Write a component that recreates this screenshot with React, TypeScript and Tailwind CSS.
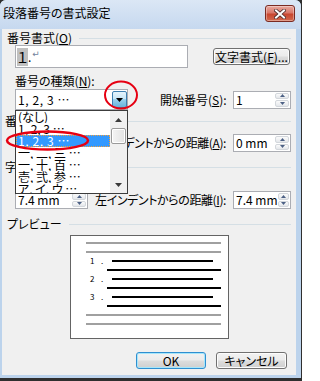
import React from "react";

function U({ c }: { c: string }) {
  return <span className="underline underline-offset-[1px]">{c}</span>;
}

function Header({ children, shift }: { children: React.ReactNode; shift?: boolean }) {
  return (
    <div className="flex h-[14px] items-center">
      <span
        className={
          shift
            ? "ml-[-2px] whitespace-nowrap text-[12px] leading-[14px]"
            : "whitespace-nowrap text-[12px] leading-[14px]"
        }
      >
        {children}
      </span>
      <div className="ml-[7px] h-px flex-1 bg-[#d5dfe5]" />
    </div>
  );
}

function SpinBtn({ up }: { up?: boolean }) {
  return (
    <div className="flex flex-1 items-center justify-center rounded-[2px] border border-[#d3d7dc] bg-[linear-gradient(#fbfbfb,#e4e7eb)]">
      <svg width="5" height="3" viewBox="0 0 5 3">
        <path d={up ? "M0 3H5L2.5 0Z" : "M0 0H5L2.5 3Z"} fill="#4d6185" />
      </svg>
    </div>
  );
}

function Spin({ value, className }: { value: string; className: string }) {
  return (
    <div className={`flex h-[18px] border border-[#abadb3] bg-white ${className}`}>
      <div className="flex-1 whitespace-nowrap pl-[2px] text-[12px] leading-[16px]">{value}</div>
      <div className="flex w-[15px] flex-col gap-px py-px pr-px">
        <SpinBtn up />
        <SpinBtn />
      </div>
    </div>
  );
}

const items = [
  "(なし)",
  "1, 2, 3 …",
  "1, 2, 3 …",
  "一, 二, 三 …",
  "一, 十, 百 …",
  "壱, 弐, 参 …",
  "ア, イ, ウ …",
];

function DropList() {
  return (
    <div className="absolute left-[-1px] top-[20px] z-10 flex h-[84px] w-[113px] border border-[#3c3c3c] bg-white">
      <div className="flex-1 overflow-hidden">
        {items.map((t, i) =>
          i === 2 ? (
            <div
              key={i}
              className="flex h-[12px] items-center overflow-hidden whitespace-nowrap border border-dotted border-[#f0a040] bg-[#3399ff] pl-px text-[12px] leading-[12px] tracking-[0.6px] text-white"
            >
              {t}
            </div>
          ) : (
            <div
              key={i}
              className="flex h-[12px] items-center overflow-hidden whitespace-nowrap pl-[2px] text-[12px] leading-[12px]"
            >
              {t}
            </div>
          )
        )}
      </div>
      <div className="flex w-[17px] flex-col bg-[#f0f0f0]">
        <div className="flex h-[17px] items-center justify-center">
          <svg width="7" height="4" viewBox="0 0 7 4">
            <path d="M0 4H7L3.5 0Z" fill="#3a3a3a" />
          </svg>
        </div>
        <div className="mx-px h-[16px] rounded-[2px] border border-[#9a9a9a] bg-[linear-gradient(90deg,#f4f4f4,#e2e2e2)] shadow-[inset_0_0_0_1px_#ffffff]" />
        <div className="flex-1" />
        <div className="flex h-[17px] items-center justify-center">
          <svg width="7" height="4" viewBox="0 0 7 4">
            <path d="M0 0H7L3.5 4Z" fill="#3a3a3a" />
          </svg>
        </div>
      </div>
    </div>
  );
}

function Combo() {
  return (
    <div className="relative ml-[8px] flex h-[21px] w-[113px] items-center border border-[#abadb3] bg-white">
      <span className="flex-1 whitespace-nowrap pl-[2px] text-[12px] leading-[14px] tracking-[0.6px]">
        1, 2, 3 …
      </span>
      <div className="flex h-[17px] w-[15px] items-center justify-center rounded-[2px] border border-[#3c7fb1] bg-[linear-gradient(#e5f4fc_0%,#c4e5f6_50%,#98d1ef_50%,#68b3db_100%)]">
        <svg width="7" height="4" viewBox="0 0 7 4">
          <path d="M0 0H7L3.5 4Z" fill="#000" />
        </svg>
      </div>
      <DropList />
    </div>
  );
}

function Gray() {
  return <div className="ml-[15px] h-[2px] w-[135px] bg-[#a0a0a0]" />;
}

function NumRow({ n }: { n: string }) {
  return (
    <>
      <div className="flex h-[2px] items-center">
        <span className="ml-[19px] w-[11px] text-[8px] leading-none">{n}</span>
        <span className="w-[11px] text-[8px] leading-none">.</span>
        <div className="h-[2px] w-[101px] bg-black" />
      </div>
      <div className="ml-[36px] h-[2px] w-[114px] bg-black" />
    </>
  );
}

const btnBase =
  "flex items-center justify-center rounded-[3px] border text-[12px] leading-[14px] bg-[linear-gradient(#f2f2f2_0%,#ebebeb_48%,#dddddd_52%,#cfcfcf_100%)]";

export default function App() {
  return (
    <div className="relative h-[381px] w-[302px] overflow-hidden bg-[#2f2f2f] pb-[3px] pr-px font-['Noto_Sans_CJK_JP',sans-serif] text-black [font-feature-settings:'palt']">
      <div className="flex h-full w-full flex-col rounded-t-[6px] bg-[#bcd3ec]">
        {/* title bar */}
        <div className="flex h-[29px] items-start rounded-t-[6px] bg-[linear-gradient(#dbe7f5,#c6d8ef)]">
          <span className="ml-[3px] mt-[6px] whitespace-nowrap text-[12px] leading-[14px]">
            段落番号の書式設定
          </span>
          <div className="ml-auto mr-[6px] mt-[5px] flex h-[17px] w-[30px] items-center justify-center rounded-[3px] border border-[#7a2a22] bg-[linear-gradient(#e8a99f_0%,#d9786a_45%,#c8462f_55%,#d26a4f_100%)] shadow-[inset_0_0_0_1px_rgba(255,255,255,0.35)]">
            <svg width="12" height="10" viewBox="0 0 12 10">
              <path d="M2 1.5L10 8.5M10 1.5L2 8.5" stroke="#4a2a2a" strokeWidth="3.6" strokeLinecap="square" />
              <path d="M2 1.5L10 8.5M10 1.5L2 8.5" stroke="#ffffff" strokeWidth="2" strokeLinecap="square" />
            </svg>
          </div>
        </div>

        {/* client */}
        <div className="flex flex-1 flex-col pb-[3px] pl-[2px] pr-[5px]">
          <div className="flex flex-1 flex-col bg-[#f0f0f0] px-[5px]">
            <div className="mt-[2px]">
              <Header>
                番号書式(<U c="O" />)
              </Header>
            </div>

            <div className="flex h-[23px] items-center">
              <div className="ml-[8px] flex h-[23px] w-[173px] items-center border border-[#abadb3] bg-white pl-px">
                <span className="flex h-[18px] w-[11px] items-center justify-center bg-[#c0c0c0] text-[14px] leading-[18px]">
                  １
                </span>
                <span className="text-[12px] leading-[14px]">.</span>
                <span className="ml-px self-start pt-[3px] font-['DejaVu_Sans',sans-serif] text-[9px] leading-[10px] text-[#6f829c]">
                  ↵
                </span>
              </div>
              <div className={`ml-[25px] h-[17px] w-[77px] border-[#707070] shadow-[inset_0_0_0_1px_#fcfcfc] ${btnBase}`}>
                文字書式(<U c="F" />)...
              </div>
            </div>

            <div className="ml-[8px] mt-[6px] h-[14px] whitespace-nowrap text-[12px] leading-[14px]">
              番号の種類(<U c="N" />):
            </div>

            <div className="mt-px flex h-[21px] items-center">
              <Combo />
              <span className="ml-[32px] whitespace-nowrap text-[12px] leading-[14px]">
                開始番号(<U c="S" />):
              </span>
              <Spin value="1" className="ml-auto w-[58px]" />
            </div>

            <div className="mt-[4px]">
              <Header shift>番号の位置</Header>
            </div>

            <div className="mt-[6px] flex h-[18px] items-center">
              <span className="ml-auto mr-[7px] whitespace-nowrap text-[12px] leading-[14px] tracking-[-0.4px]">
                左インデントからの距離(<U c="A" />):
              </span>
              <Spin value="0 mm" className="w-[58px]" />
            </div>

            <div className="mt-[8px]">
              <Header shift>字下げ位置</Header>
            </div>

            <div className="mt-[17px] flex h-[18px] items-center">
              <Spin value="7.4 mm" className="ml-[8px] w-[73px]" />
              <span className="ml-auto mr-[7px] whitespace-nowrap text-[12px] leading-[14px] tracking-[-0.4px]">
                左インデントからの距離(<U c="I" />):
              </span>
              <Spin value="7.4 mm" className="w-[58px]" />
            </div>

            <div className="mt-[8px]">
              <Header>プレビュー</Header>
            </div>

            <div className="ml-[63px] mt-[4px] h-[104px] w-[159px] border border-[#646464] bg-white">
              <div className="flex flex-col gap-[7px] pt-[6px]">
                <Gray />
                <Gray />
                <NumRow n="1" />
                <NumRow n="2" />
                <NumRow n="3" />
                <Gray />
                <Gray />
              </div>
            </div>

            <div className="mt-[13px] flex h-[17px] justify-end pr-[4px]">
              <div className={`h-[17px] w-[70px] border-[#2f8fd0] shadow-[inset_0_0_0_1px_#a6e6fb] ${btnBase}`}>
                OK
              </div>
              <div className={`ml-[10px] h-[17px] w-[71px] border-[#707070] shadow-[inset_0_0_0_1px_#fcfcfc] ${btnBase}`}>
                キャンセル
              </div>
            </div>
          </div>
        </div>
      </div>

      {/* red annotation marks */}
      <svg
        width="302"
        height="381"
        viewBox="0 0 302 381"
        className="pointer-events-none absolute left-0 top-0 z-30"
      >
        <ellipse cx="121" cy="95" rx="16" ry="13.5" fill="none" stroke="#e60012" strokeWidth="2" />
        <ellipse cx="47.5" cy="140.5" rx="40.5" ry="9" fill="none" stroke="#e60012" strokeWidth="2.5" />
      </svg>
    </div>
  );
}
